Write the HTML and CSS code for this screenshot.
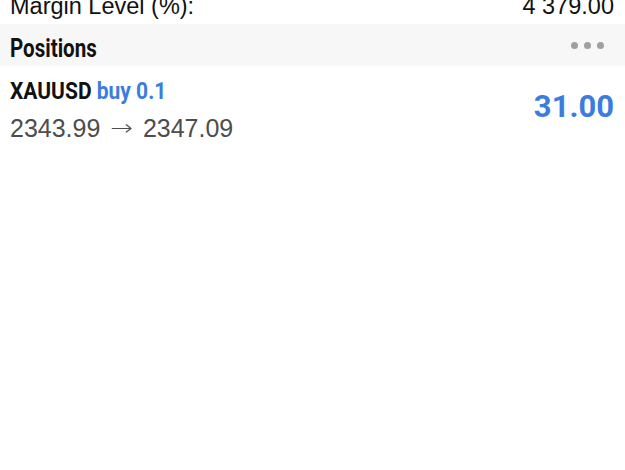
FILE: index.html
```html
<!DOCTYPE html>
<html lang="en">
<head>
    <meta charset="UTF-8">
    <title>Positions</title>
    <link rel="stylesheet" href="styles.css">
</head>
<body>
<div class="summary_row">
    <span>Margin Level (%):</span>
    <span>4 379.00</span>
</div>
<div class="section_bar">
    <span class="section_title">Positions</span>
    <span class="more"><i></i><i></i><i></i></span>
</div>
<div class="position">
    <div class="pos_info">
        <div class="pos_title">XAUUSD <span class="side">buy 0.1</span></div>
        <div class="pos_prices">2343.99 <span class="arrow">→</span> 2347.09</div>
    </div>
    <div class="pos_profit">31.00</div>
</div>
</body>
</html>
```

FILE: styles.css
```css
*{
    margin: 0;
    padding: 0;
    box-sizing: border-box;
}
body{
    background: #ffffff;
    font-family: "Liberation Sans", Arial, sans-serif;
    color: #111111;
}
.summary_row{
    display: flex;
    justify-content: space-between;
    height: 29px;
    margin-top: -6px;
    padding: 0 11px 0 10px;
    font-size: 23.5px;
    line-height: 24px;
}
.section_bar{
    display: flex;
    justify-content: space-between;
    align-items: center;
    height: 42px;
    margin-top: 1px;
    background: #f7f7f7;
    padding: 0 21px 0 10px;
}
.section_title{
    display: inline-block;
    padding-top: 6px;
    font-family: Roboto, sans-serif;
    font-weight: bold;
    font-size: 26px;
    color: #111111;
    transform: scaleX(0.79);
    transform-origin: left center;
}
.more{
    display: flex;
    gap: 6px;
}
.more i{
    display: block;
    width: 7px;
    height: 7px;
    border-radius: 50%;
    background: #a0a0a0;
}
.position{
    display: flex;
    justify-content: space-between;
    align-items: flex-start;
    padding: 10px 11px 0 10px;
}
.pos_title{
    font-family: Roboto, sans-serif;
    font-weight: bold;
    font-size: 24px;
    line-height: 30px;
    color: #111111;
    transform: scaleX(0.875);
    transform-origin: left center;
    white-space: nowrap;
}
.side{
    color: #3b7ddd;
}
.pos_prices{
    font-size: 25px;
    line-height: 30px;
    color: #4d4d4d;
    margin-top: 7px;
}
.arrow{
    display: inline-block;
    margin: 0 3px;
    font-family: "DejaVu Sans", sans-serif;
    font-weight: 200;
    font-size: 27px;
    transform: scaleY(0.8);
}
.pos_profit{
    margin-top: 13px;
    font-family: Roboto, sans-serif;
    font-weight: bold;
    font-size: 31px;
    line-height: 36px;
    color: #3b7ddd;
}
```
